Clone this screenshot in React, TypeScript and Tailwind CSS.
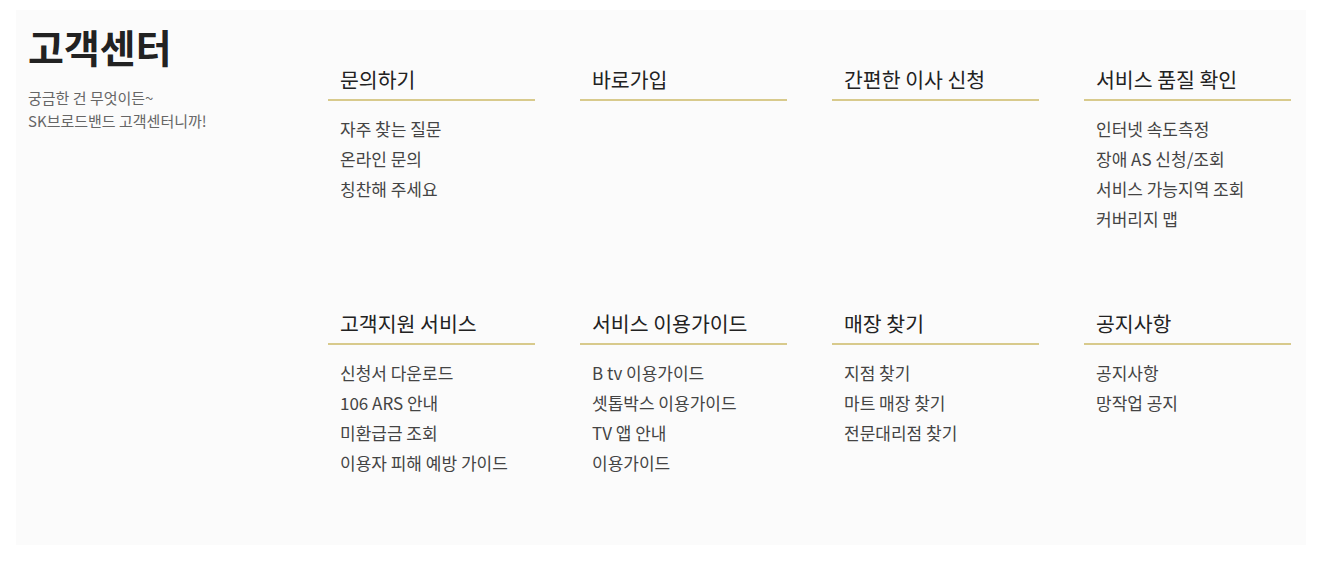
import { FC } from "react";

interface MenuGroup {
  title: string;
  links: string[];
}

const groups: MenuGroup[] = [
  { title: "문의하기", links: ["자주 찾는 질문", "온라인 문의", "칭찬해 주세요"] },
  { title: "바로가입", links: [] },
  { title: "간편한 이사 신청", links: [] },
  {
    title: "서비스 품질 확인",
    links: ["인터넷 속도측정", "장애 AS 신청/조회", "서비스 가능지역 조회", "커버리지 맵"],
  },
  {
    title: "고객지원 서비스",
    links: ["신청서 다운로드", "106 ARS 안내", "미환급금 조회", "이용자 피해 예방 가이드"],
  },
  {
    title: "서비스 이용가이드",
    links: ["B tv 이용가이드", "셋톱박스 이용가이드", "TV 앱 안내", "이용가이드"],
  },
  { title: "매장 찾기", links: ["지점 찾기", "마트 매장 찾기", "전문대리점 찾기"] },
  { title: "공지사항", links: ["공지사항", "망작업 공지"] },
];

const MenuColumn: FC<MenuGroup> = ({ title, links }) => (
  <div className="flex flex-col">
    <h3 className="px-3 pb-[6px] text-[20.5px] leading-[28px] font-normal text-[#222] border-b-2 border-[#d8ca8c]">
      {title}
    </h3>
    <ul className="mt-[13px] flex flex-col">
      {links.map((link) => (
        <li key={link} className="px-3 text-[17px] leading-[30px] text-[#444]">
          <a href="#">{link}</a>
        </li>
      ))}
    </ul>
  </div>
);

export default function App() {
  return (
    <div
      className="w-full h-[565px] bg-white pt-[10px] pl-[16px] pr-[18px] pb-[20px]"
      style={{ fontFamily: '"Noto Sans CJK KR", "Noto Sans", sans-serif' }}
    >
      <div className="h-full bg-[#fbfbfb] flex">
        <div className="w-[312px] shrink-0 pl-[12px] pt-[14px]">
          <h2 className="text-[39px] leading-[44px] font-bold text-[#222]">고객센터</h2>
          <p className="mt-[18px] text-[15px] leading-[23px] text-[#666]">
            궁금한 건 무엇이든~
            <br />
            SK브로드밴드 고객센터니까!
          </p>
        </div>
        <div className="pt-[55px] grid grid-cols-[repeat(4,207px)] auto-rows-[244px] gap-x-[45px]">
          {groups.map((g) => (
            <MenuColumn key={g.title} {...g} />
          ))}
        </div>
      </div>
    </div>
  );
}
